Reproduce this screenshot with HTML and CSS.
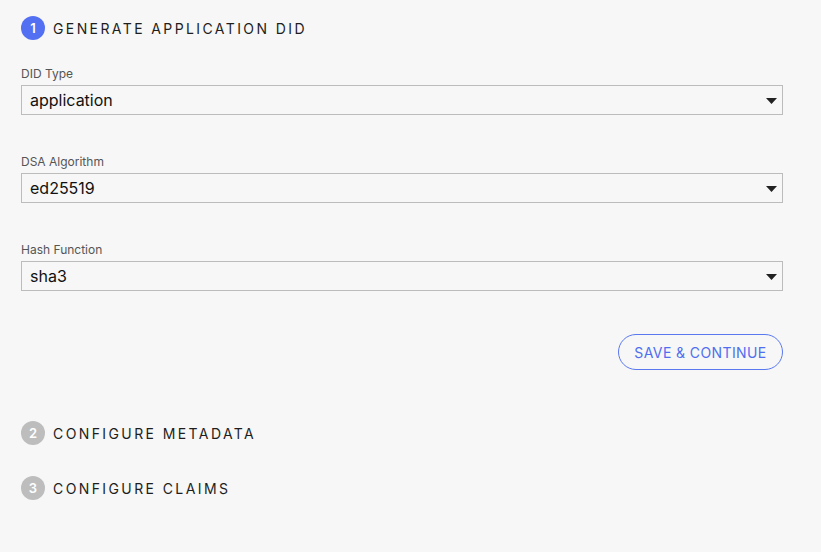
FILE: index.html
```html
<!DOCTYPE html>
<html>
<head>
<meta charset="utf-8">
<link rel="stylesheet" href="styles.css">
</head>
<body>
<div class="page">
  <div class="step">
    <span class="badge active">1</span>
    <span class="step-title">GENERATE APPLICATION DID</span>
  </div>
  <div class="form">
    <div class="field">
      <div class="label">DID Type</div>
      <div class="select"><span>application</span><svg class="caret" width="11" height="6" viewBox="0 0 11 6"><path d="M0 0h11L5.5 6z" fill="#222"/></svg></div>
    </div>
    <div class="field">
      <div class="label">DSA Algorithm</div>
      <div class="select"><span>ed25519</span><svg class="caret" width="11" height="6" viewBox="0 0 11 6"><path d="M0 0h11L5.5 6z" fill="#222"/></svg></div>
    </div>
    <div class="field">
      <div class="label">Hash Function</div>
      <div class="select"><span>sha3</span><svg class="caret" width="11" height="6" viewBox="0 0 11 6"><path d="M0 0h11L5.5 6z" fill="#222"/></svg></div>
    </div>
    <div class="actions">
      <button class="btn">SAVE &amp; CONTINUE</button>
    </div>
  </div>
  <div class="step step-2">
    <span class="badge">2</span>
    <span class="step-title">CONFIGURE METADATA</span>
  </div>
  <div class="step step-3">
    <span class="badge">3</span>
    <span class="step-title">CONFIGURE CLAIMS</span>
  </div>
</div>
</body>
</html>
```
FILE: styles.css
```css
html, body {
  margin: 0;
  padding: 0;
  background: #f6f7f6;
}
body {
  font-family: Inter, "Noto Sans", sans-serif;
  color: #222;
}
.page {
  padding: 16px 38px 0 21px;
}
.step {
  display: flex;
  align-items: center;
  height: 24px;
  gap: 8px;
}
.badge {
  width: 24px;
  height: 24px;
  border-radius: 50%;
  background: #bdbdbd;
  color: #fff;
  font-size: 13px;
  font-weight: 600;
  display: flex;
  align-items: center;
  justify-content: center;
}
.badge.active {
  background: #5470f2;
}
.step-title {
  font-size: 14px;
  letter-spacing: 2.4px;
  color: #1e1e1e;
  font-weight: 400;
}
.form {
  padding-top: 26px;
}
.field {
  margin-bottom: 39px;
}
.field:last-of-type {
  margin-bottom: 0;
}
.label {
  font-size: 12px;
  line-height: 16px;
  color: #555;
  margin-bottom: 3px;
}
.select {
  height: 30px;
  box-sizing: border-box;
  border: 1px solid #bcbcbc;
  display: flex;
  align-items: center;
  justify-content: space-between;
  padding: 0 5px 0 8px;
  font-size: 16px;
  color: #111;
}
.caret {
  display: block;
  margin-top: 1px;
}
.actions {
  display: flex;
  justify-content: flex-end;
  margin-top: 43px;
}
.btn {
  height: 36px;
  width: 165px;
  box-sizing: border-box;
  border: 1px solid #5a78f0;
  border-radius: 18px;
  background: transparent;
  color: #4f6ef0;
  font-family: Inter, "Noto Sans", sans-serif;
  font-size: 14px;
  letter-spacing: 0.4px;
  padding: 0;
}
.step-2 {
  margin-top: 51px;
}
.step-3 {
  margin-top: 31px;
}
```
